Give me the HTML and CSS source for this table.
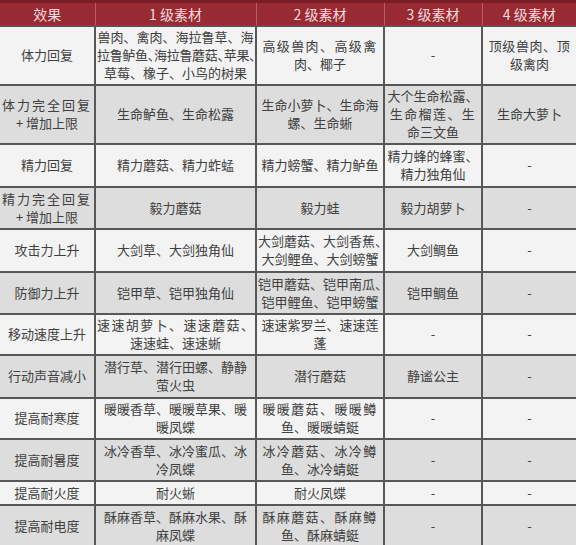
FILE: index.html
```html
<!DOCTYPE html>
<html lang="zh">
<head>
<meta charset="utf-8">
<link rel="stylesheet" href="styles.css">
</head>
<body>
<table class="tbl">
<colgroup><col class="c1"><col class="c2"><col class="c3"><col class="c4"><col class="c5"></colgroup>
<thead>
<tr class="head"><th>效果</th><th>1 级素材</th><th>2 级素材</th><th>3 级素材</th><th>4 级素材</th></tr>
</thead>
<tbody>
<tr class="lt r59"><td>体力回复</td><td>兽肉、禽肉、海拉鲁草、海<br><span class="halt">拉鲁鲈鱼、海拉鲁蘑菇、苹果、</span><br>草莓、橡子、小鸟的树果</td><td><span class="sp">高级兽肉、高级禽</span><br>肉、椰子</td><td>-</td><td><span class="sp1">顶级兽肉、顶</span><br>级禽肉</td></tr>
<tr class="dk r59"><td><span class="spw">体力完全回复</span><br>+ 增加上限</td><td>生命鲈鱼、生命松露</td><td>生命小萝卜、生命海<br>螺、生命蜥</td><td>大个生命松露、<br><span class="sp">生命榴莲、生</span><br>命三文鱼</td><td>生命大萝卜</td></tr>
<tr class="lt r43"><td>精力回复</td><td>精力蘑菇、精力蚱蜢</td><td>精力螃蟹、精力鲈鱼</td><td>精力蜂的蜂蜜、<br>精力独角仙</td><td>-</td></tr>
<tr class="dk r42"><td><span class="spw">精力完全回复</span><br>+ 增加上限</td><td>毅力蘑菇</td><td>毅力蛙</td><td>毅力胡萝卜</td><td>-</td></tr>
<tr class="lt r43"><td>攻击力上升</td><td>大剑草、大剑独角仙</td><td>大剑蘑菇、大剑香蕉、<br>大剑鲤鱼、大剑螃蟹</td><td>大剑鲷鱼</td><td>-</td></tr>
<tr class="dk r42"><td>防御力上升</td><td>铠甲草、铠甲独角仙</td><td>铠甲蘑菇、铠甲南瓜、<br>铠甲鲤鱼、铠甲螃蟹</td><td>铠甲鲷鱼</td><td>-</td></tr>
<tr class="lt r41"><td>移动速度上升</td><td><span class="sp">速速胡萝卜、速速蘑菇、</span><br>速速蛙、速速蜥</td><td>速速紫罗兰、速速莲<br>蓬</td><td>-</td><td>-</td></tr>
<tr class="dk r43"><td>行动声音减小</td><td>潜行草、潜行田螺、静静<br>萤火虫</td><td>潜行蘑菇</td><td>静谧公主</td><td>-</td></tr>
<tr class="lt r41"><td>提高耐寒度</td><td>暖暖香草、暖暖草果、暖<br>暖凤蝶</td><td><span class="sp">暖暖蘑菇、暖暖鳟</span><br>鱼、暖暖蜻蜓</td><td>-</td><td>-</td></tr>
<tr class="dk r42"><td>提高耐暑度</td><td>冰冷香草、冰冷蜜瓜、冰<br>冷凤蝶</td><td><span class="sp">冰冷蘑菇、冰冷鳟</span><br>鱼、冰冷蜻蜓</td><td>-</td><td>-</td></tr>
<tr class="lt r24"><td>提高耐火度</td><td>耐火蜥</td><td>耐火凤蝶</td><td>-</td><td>-</td></tr>
<tr class="dk r42"><td>提高耐电度</td><td>酥麻香草、酥麻水果、酥<br>麻凤蝶</td><td><span class="sp">酥麻蘑菇、酥麻鳟</span><br>鱼、酥麻蜻蜓</td><td>-</td><td>-</td></tr>
</tbody>
</table>
</body>
</html>
```

FILE: styles.css
```css
html, body {
  margin: 0;
  padding: 0;
  background: #f2f2f2;
}
.tbl {
  width: 576px;
  border-collapse: collapse;
  table-layout: fixed;
  font-family: "Noto Sans CJK SC", "Noto Sans", sans-serif;
  font-size: 13px;
  line-height: 18px;
  color: #404040;
}
.c1 { width: 95px; }
.c2 { width: 161px; }
.c3 { width: 128px; }
.c4 { width: 98px; }
.c5 { width: 94px; }
.head {
  height: 24px;
  background: #982a33;
}
.head th {
  font-weight: normal;
  font-size: 14px;
  line-height: 18px;
  color: #f4dada;
  border-top: 3px solid #7c1c25;
  border-left: 1px solid #b95d64;
  border-bottom: 2px solid #555;
  padding: 0;
}
.head th:first-child { border-left: none; }
td {
  text-align: center;
  vertical-align: middle;
  padding: 0 1px;
  border: 2px solid #575757;
  white-space: nowrap;
}
td:first-child { border-left: none; }
td:last-child { border-right: none; }
.lt { background: #f3f3f3; }
.dk { background: #dddddd; }
.r24 { height: 24px; }
.r41 { height: 41px; }
.r42 { height: 42px; }
.r43 { height: 43px; }
.r59 { height: 59px; }
.sp { letter-spacing: 1.4px; }
.spw { letter-spacing: 2px; }
.sp1 { letter-spacing: 0.6px; }
.halt { font-feature-settings: "halt"; letter-spacing: -0.3px; }
tbody tr:last-child td { border-bottom: none; }
```
